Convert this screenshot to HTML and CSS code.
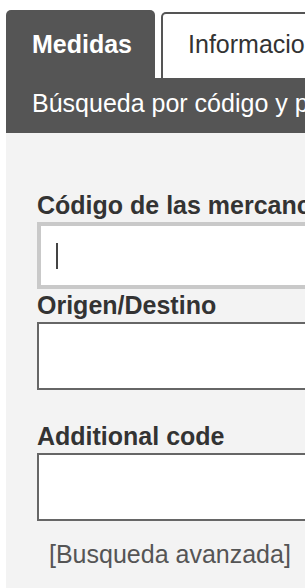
FILE: index.html
```html
<!DOCTYPE html>
<html lang="es">
<head>
<meta charset="utf-8">
<title>Medidas</title>
<link rel="stylesheet" href="styles.css">
</head>
<body>
<div class="app">
  <div class="tabs">
    <div class="tab tab-active">Medidas</div>
    <div class="tab tab-inactive">Informacion</div>
  </div>
  <div class="subtitle">Búsqueda por código y país</div>
  <div class="panel">
    <div class="label">Código de las mercancías</div>
    <div class="input input-focus"><span class="caret"></span></div>
    <div class="label">Origen/Destino</div>
    <div class="input"></div>
    <div class="label label-spaced">Additional code</div>
    <div class="input"></div>
    <div class="advanced">[Busqueda avanzada]</div>
  </div>
</div>
</body>
</html>
```
FILE: styles.css
```css
html, body {
  margin: 0;
  padding: 0;
  overflow: hidden;
  background: #fff;
  font-family: "Liberation Sans", Arial, sans-serif;
}

.app {
  margin-left: 6px;
  padding-top: 10px;
  width: 700px;
}

.tabs {
  display: flex;
  align-items: flex-end;
  gap: 6px;
}

.tab {
  font-size: 25px;
  line-height: 33px;
  white-space: nowrap;
  border-radius: 5px 5px 0 0;
}

.tab-active {
  background: #555;
  color: #fff;
  font-weight: bold;
  padding: 18px 23px 17px 26px;
}

.tab-inactive {
  background: #fff;
  color: #333;
  border: 2px solid #555;
  border-bottom: none;
  padding: 14px 40px 17px 25px;
}

.subtitle {
  background: #555;
  color: #fff;
  font-size: 25px;
  line-height: 33px;
  white-space: nowrap;
  padding: 9px 0 13px 26px;
}

.panel {
  background: #f3f3f3;
  padding: 56px 0 40px 31px;
  min-height: 500px;
}

.label {
  font-size: 25px;
  line-height: 33px;
  font-weight: bold;
  color: #333;
  white-space: nowrap;
}

.label-spaced {
  margin-top: 30px;
}

.input {
  box-sizing: border-box;
  width: 520px;
  height: 68px;
  background: #fff;
  border: 2px solid #666;
  display: flex;
  align-items: center;
}

.input-focus {
  height: 67px;
  border: 4px solid #c9c9c9;
}

.caret {
  width: 2px;
  height: 26px;
  margin-left: 15px;
  background: #444;
}

.advanced {
  margin-top: 17px;
  padding-left: 12px;
  font-size: 25px;
  line-height: 33px;
  color: #555;
  white-space: nowrap;
}
```
